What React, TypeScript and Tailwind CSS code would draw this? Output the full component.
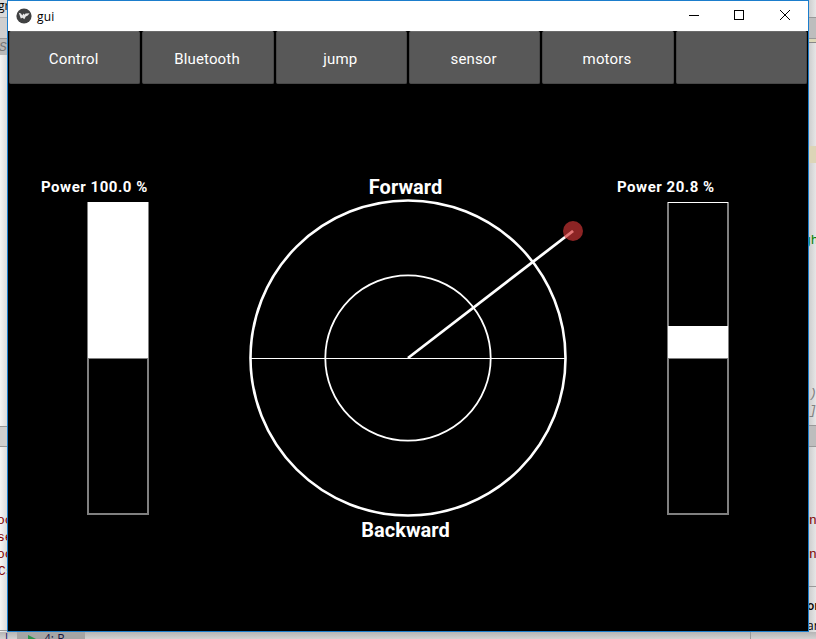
type PowerProps = { value: string; top: number; bottom: number; offset: string };

const tabs = ["Control", "Bluetooth", "jump", "sensor", "motors", ""];

function TitleBar() {
  return (
    <header className="flex h-[30px] shrink-0 items-center bg-white text-black">
      <svg className="ml-2 h-4 w-4" viewBox="0 0 16 16">
        <circle cx="8" cy="8" r="7.6" fill="#404142" />
        <path d="M2.8 4.8 L5 5.6 L6.2 7.6 L7.5 5.4 L8.6 6.8 L9.5 5.6 L13.6 5.3 L11.8 7.6 L9.8 8.4 L8.3 11.2 L6.6 9.8 L4.8 10.6 Z" fill="#e8e8e8" />
      </svg>
      <span className="ml-[5px] pt-px font-['Open_Sans',sans-serif] text-[12px] leading-4 tracking-[0.2px]">gui</span>
      <div className="ml-auto flex items-center">
        <svg className="h-[30px] w-[138px]" viewBox="0 0 138 30" fill="none" stroke="#000" shapeRendering="crispEdges">
          <path d="M19 14.5h10" />
          <rect x="64.5" y="9.5" width="9" height="9" />
          <path d="M110 9l10 10M120 9l-10 10" shapeRendering="auto" />
        </svg>
      </div>
    </header>
  );
}

function TabBar() {
  return (
    <nav className="grid h-[53px] shrink-0 grid-cols-6">
      {tabs.map((tab, i) => (
        <div key={i} className="px-px">
          <button className="block h-full w-full rounded-[2px] border border-[#484848] border-t-[#6b6b6b] bg-[#585858] pt-[3px] pr-[2px] text-center text-[15px] leading-[18px] tracking-[0.15px] text-white">
            {tab}
          </button>
        </div>
      ))}
    </nav>
  );
}

function PowerGauge({ value, top, bottom, offset }: PowerProps) {
  return (
    <section className="w-[120px] pt-[94px]">
      <h2 className="h-[23px] text-[15px] leading-[18px] font-bold tracking-[0.53px] whitespace-nowrap">Power {value} %</h2>
      <svg className={`${offset} block h-[316px] w-[64px]`} viewBox="0 0 64 316" shapeRendering="crispEdges">
        <rect x="0" y="1" width="2" height="313" fill="#808080" />
        <rect x="60" y="1" width="2" height="313" fill="#808080" />
        <rect x="1" y="1" width="60" height="1" fill="#fff" />
        <rect x="1" y="312" width="60" height="2" fill="#808080" />
        <rect x="1" y={top} width="60" height={bottom - top} fill="#fff" />
        <rect x="1" y="157" width="60" height="1" fill="#808080" />
      </svg>
    </section>
  );
}

function Joystick() {
  return (
    <section className="flex w-[340px] flex-col pt-[91px] text-center text-[20px] leading-6 font-bold">
      <h2 className="pr-[25px]">Forward</h2>
      <svg className="block h-[319px] w-[340px] shrink-0" viewBox="0 0 340 319" fill="none" stroke="#fff">
        <circle cx="160" cy="159" r="157.5" strokeWidth="2.6" />
        <circle cx="160" cy="159" r="82.7" strokeWidth="1.8" />
        <path d="M3 159.5h314" shapeRendering="crispEdges" />
        <path d="M160 159L325 32" strokeWidth="2.8" />
        <circle cx="325" cy="32" r="10" fill="#a52a2a" fillOpacity="0.85" stroke="none" />
        <path d="M317 38.2L325 32" stroke="#e47474" strokeWidth="2.6" />
      </svg>
      <h2 className="pr-[25px]">Backward</h2>
    </section>
  );
}

function LeftBackdrop() {
  return (
    <aside className="h-full w-[7px] shrink-0 overflow-hidden bg-linear-to-r from-[#f5f5f5] to-[#dcdcdc] font-['Liberation_Mono',monospace] text-[13px] leading-[17px] text-[#800000]">
      <div className="h-[18px] border-b border-[#b0b0b0] bg-[#dadada] font-['Open_Sans',sans-serif] text-[12px] leading-[11px] text-black">
        <span className="-ml-[2px]">gr</span>
      </div>
      <div className="h-[21px] border-b border-[#999] bg-[#cfcfcf]" />
      <div className="h-[16px] bg-[#b9b9b9] text-[#777] italic">
        <span className="-ml-px">S</span>
      </div>
      <div className="h-[371px]" />
      <div className="h-[21px] border-y border-[#999] bg-[#cfcfcf]" />
      <div className="h-[65px]" />
      <p className="-ml-[3px]">oc</p>
      <p className="-ml-[3px]">se</p>
      <p className="-ml-[3px]">oc</p>
      <p className="-ml-[2px]">Cs</p>
      <div className="h-[51px] border-b border-[#999]" />
    </aside>
  );
}

function RightBackdrop() {
  return (
    <aside className="h-full w-[7px] shrink-0 overflow-hidden bg-linear-to-r from-[#cecece] to-[#e6e6e6] font-['Liberation_Mono',monospace] text-[13px] leading-[17px]">
      <div className="h-[18px] border-b border-[#999]" />
      <div className="h-[21px] border-b border-[#999] bg-[#bdbdbd]" />
      <div className="h-1 border-b border-[#888] bg-[#dcd8b8]" />
      <div className="h-[103px]" />
      <div className="h-[17px] bg-[#dcd5b7]" />
      <div className="h-[69px]" />
      <p className="-ml-[6px] text-[#008000]">gh</p>
      <div className="h-[136px]" />
      <p className="text-[#808080] italic">)</p>
      <p className="text-[#808080] italic">]</p>
      <div className="h-[6px]" />
      <div className="h-[22px] border-y border-[#999] bg-[#bdbdbd]" />
      <div className="h-[65px]" />
      <p className="text-[#800000]">n</p>
      <div className="h-[17px]" />
      <p className="text-[#800000]">n</p>
      <div className="h-[24px] border-b border-[#999]" />
      <div className="h-[9px]" />
      <div className="-ml-[2px] font-['Open_Sans',sans-serif] text-[12px] leading-[20px] text-black">
        <p className="font-semibold">on</p>
        <p>an</p>
      </div>
    </aside>
  );
}

function BottomBackdrop() {
  return (
    <footer className="flex h-[7px] overflow-hidden bg-linear-to-b from-[#b5b5b5] to-[#d2d2d2] font-['Open_Sans',sans-serif] text-[12px] leading-[14px] text-black">
      <div className="w-[17px] overflow-hidden pl-[5px] text-[#242470]">l</div>
      <div className="flex w-[68px] bg-[#a5a5a5] pl-[11px]">
        <svg className="h-[7px] w-[10px] shrink-0" viewBox="0 0 10 7"><path d="M0 3L8 7H0Z" fill="#27964a" /></svg>
        <span className="ml-[6px] text-[#151544]">4: R</span>
      </div>
      <div className="w-[666px] border-r border-[#999]" />
    </footer>
  );
}

export default function App() {
  return (
    <div className="h-[639px] w-[816px] overflow-hidden bg-[#d0d0d0] font-['Roboto',sans-serif]">
      <div className="flex h-[632px]">
        <LeftBackdrop />
        <main className="flex w-[802px] shrink-0 flex-col border border-[#1b7dcc] bg-black text-white">
          <TitleBar />
          <TabBar />
          <div className="flex pl-[33px]">
            <PowerGauge value="100.0" top={1} bottom={157} offset="ml-[46px]" />
            <div className="ml-[87px] flex">
              <Joystick />
            </div>
            <div className="ml-[29px]">
              <PowerGauge value="20.8" top={125} bottom={157} offset="ml-[50px]" />
            </div>
          </div>
        </main>
        <RightBackdrop />
      </div>
      <BottomBackdrop />
    </div>
  );
}
